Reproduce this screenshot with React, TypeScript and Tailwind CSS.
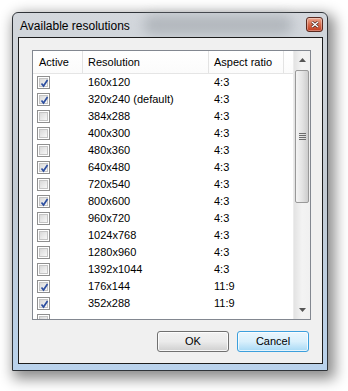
import React from 'react'

type Row = { on: boolean; res: string; ratio: string }

const rows: Row[] = [
  { on: true, res: '160x120', ratio: '4:3' },
  { on: true, res: '320x240 (default)', ratio: '4:3' },
  { on: false, res: '384x288', ratio: '4:3' },
  { on: false, res: '400x300', ratio: '4:3' },
  { on: false, res: '480x360', ratio: '4:3' },
  { on: true, res: '640x480', ratio: '4:3' },
  { on: false, res: '720x540', ratio: '4:3' },
  { on: true, res: '800x600', ratio: '4:3' },
  { on: false, res: '960x720', ratio: '4:3' },
  { on: false, res: '1024x768', ratio: '4:3' },
  { on: false, res: '1280x960', ratio: '4:3' },
  { on: false, res: '1392x1044', ratio: '4:3' },
  { on: true, res: '176x144', ratio: '11:9' },
  { on: true, res: '352x288', ratio: '11:9' },
  // partly scrolled out, only the checkbox top shows
  { on: false, res: '', ratio: '' },
]

function Check({ on }: { on: boolean }) {
  return (
    <div className="w-[13px] h-[13px] border border-[#8f8f8f] bg-white p-[1px]">
      <div className="relative w-full h-full border border-[#c4c4c4] bg-gradient-to-br from-[#d9d9d9] to-[#f7f7f7]">
        {on && (
          <svg viewBox="0 0 9 9" className="absolute left-[0px] top-[0px] w-[9px] h-[9px]">
            <path d="M1.5 4.5 L3.5 7 L7.5 1" fill="none" stroke="#2d4fa0" strokeWidth="1.7" />
          </svg>
        )}
      </div>
    </div>
  )
}

function Arrow({ up }: { up?: boolean }) {
  return (
    <svg viewBox="0 0 7 4" className="w-[7px] h-[4px]">
      <path d={up ? 'M0 4 L3.5 0 L7 4 Z' : 'M0 0 L3.5 4 L7 0 Z'} fill="#555" />
    </svg>
  )
}

function ScrollBar() {
  return (
    <div className="w-[17px] flex flex-col bg-gradient-to-r from-[#e3e3e3] via-[#f3f3f3] to-[#f0f0f0] border-l border-[#ececec]">
      <div className="h-[18px] flex items-center justify-center">
        <Arrow up />
      </div>
      <div className="mx-[1px] mt-[1px] h-[133px] rounded-[2px] border border-[#999] bg-gradient-to-r from-[#f4f4f4] via-[#e4e4e4] to-[#cdcdcd] flex items-center justify-center">
        <div className="flex flex-col gap-[1px]">
          <div className="w-[7px] h-[1px] bg-[#6d6d6d]" />
          <div className="w-[7px] h-[1px] bg-[#6d6d6d]" />
          <div className="w-[7px] h-[1px] bg-[#6d6d6d]" />
          <div className="w-[7px] h-[1px] bg-[#6d6d6d]" />
        </div>
      </div>
      <div className="flex-1" />
      <div className="h-[18px] flex items-center justify-center">
        <Arrow />
      </div>
    </div>
  )
}

export default function App() {
  return (
    <div
      className="w-[348px] h-[391px] bg-white pl-[12px] pt-[12px] overflow-hidden"
      style={{ fontFamily: '"Liberation Sans", Arial, sans-serif' }}
    >
      {/* window */}
      <div className="relative w-[316px] h-[359px] border border-[#2f3338] rounded-t-[6px] bg-gradient-to-b from-[#d3d7dc] via-[#c3cbd3] to-[#b9d2ec] shadow-[4px_5px_14px_3px_rgba(0,0,0,0.45)] flex flex-col pl-[5px] pr-[4px] pb-[6px]">
        {/* blurred glass behind title */}
        <div className="absolute left-[130px] top-[2px] w-[150px] h-[20px] rounded-full bg-[#9ea4aa] opacity-60 blur-[6px]" />
        {/* title bar */}
        <div className="relative h-[24px] flex items-center">
          <span className="text-[12px] text-black pl-[2px] pt-[1px]">Available resolutions</span>
          <div className="absolute right-[0px] top-[4px] w-[17px] h-[15px] rounded-[3px] border border-[#5a2a20] bg-gradient-to-b from-[#eba891] via-[#d66a4c] to-[#c0391b] flex items-center justify-center shadow-[inset_0_0_0_1px_rgba(255,255,255,0.35)]">
            <svg viewBox="0 0 8 7" className="w-[8px] h-[7px]">
              <path d="M1 1 L7 6 M7 1 L1 6" stroke="#3a1a14" strokeWidth="2.6" />
              <path d="M1 1 L7 6 M7 1 L1 6" stroke="#fff" strokeWidth="1.5" />
            </svg>
          </div>
        </div>
        {/* client area */}
        <div className="relative flex-1 border border-[#1d1d1d] bg-[#f0f0f0] flex flex-col pl-[13px] pr-[11px] pt-[12px] pb-[11px]">
          {/* list view */}
          <div className="h-[270px] border border-[#828790] bg-white flex overflow-hidden">
            <div className="flex-1 flex flex-col overflow-hidden">
              <div className="h-[23px] flex border-b border-[#e5e5e5] bg-gradient-to-b from-white to-[#fbfbfb] text-[11px] text-black shrink-0">
                <div className="w-[50px] pl-[6px] flex items-center border-r border-[#e3e3e3]">Active</div>
                <div className="w-[126px] pl-[5px] flex items-center border-r border-[#e3e3e3]">Resolution</div>
                <div className="w-[75px] pl-[5px] flex items-center border-r border-[#e3e3e3]">Aspect ratio</div>
                <div className="flex-1" />
              </div>
              {rows.map((r, i) => (
                <div key={i} className="h-[17px] flex items-center text-[11px] text-black shrink-0">
                  <div className="w-[50px] pl-[4px] flex items-center">
                    <Check on={r.on} />
                  </div>
                  <div className="w-[126px] pl-[5px]">{r.res}</div>
                  <div className="w-[75px] pl-[5px]">{r.ratio}</div>
                </div>
              ))}
            </div>
            <ScrollBar />
          </div>
          {/* buttons */}
          <div className="mt-[11px] flex justify-end gap-[8px] pr-[2px]">
            <button className="w-[72px] h-[21px] rounded-[3px] border border-[#707070] bg-gradient-to-b from-[#f2f2f2] via-[#ebebeb] to-[#cfcfcf] text-[11px] text-black shadow-[inset_0_0_0_1px_rgba(255,255,255,0.8)]">
              OK
            </button>
            <button className="w-[72px] h-[21px] rounded-[3px] border border-[#3c9fdc] bg-gradient-to-b from-[#eaf6fd] via-[#d9f0fc] to-[#a7d9f5] text-[11px] text-black shadow-[inset_0_0_0_1px_rgba(255,255,255,0.7)]">
              Cancel
            </button>
          </div>
        </div>
      </div>
    </div>
  )
}
